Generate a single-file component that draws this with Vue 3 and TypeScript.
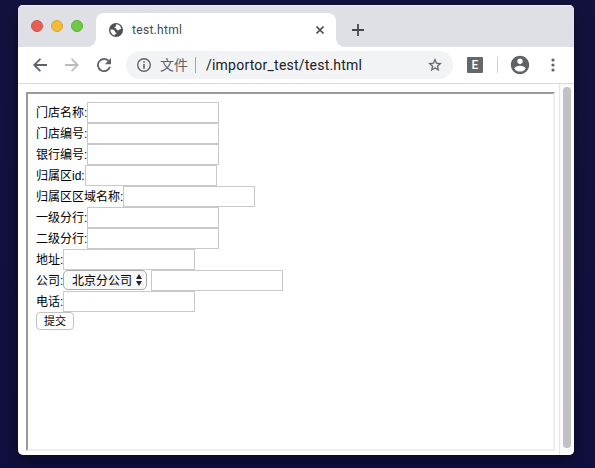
<script setup lang="ts">
interface Field {
  label: string
  width: number
  company?: boolean
}

const fields: Field[] = [
  { label: '门店名称:', width: 51 },
  { label: '门店编号:', width: 51 },
  { label: '银行编号:', width: 51 },
  { label: '归属区id:', width: 49 },
  { label: '归属区区域名称:', width: 87 },
  { label: '一级分行:', width: 51 },
  { label: '二级分行:', width: 51 },
  { label: '地址:', width: 27 },
  { label: '公司:', width: 27, company: true },
  { label: '电话:', width: 27 },
]
</script>

<template>
  <div class="desktop">
    <main class="window">
      <header class="tabs">
        <div class="lights"><i class="red" /><i class="yellow" /><i class="green" /></div>
        <div class="tab">
          <svg class="globe" width="14" height="14" viewBox="0 0 14 14">
            <circle cx="7" cy="7" r="7" fill="#4d5156" />
            <path d="M7.8 1.3c-1.3.5-1.1 1.3-.8 2.1-1.2.1-1.7.6-1.6 1.7.9-.1 1.7.1 2 .9.4 1 .8 1.4 1.9 1.2 1-.2 1.1-1.4 2.9-1.2C12 3.4 10.3 1.5 7.8 1.3zM1.4 6.5c-.1 3 1.4 5.2 4.3 6v-1.2c1.2-.1 1.8-.5 1.8-1.6-.9-.1-1.4-.4-1.6-1.3-.2-1.5-1.7-2-4.5-1.9z" fill="#fff" />
          </svg>
          <span class="title">test.html</span>
          <svg class="close" width="8" height="8" viewBox="0 0 8 8"><path d="M.5.5l7 7m0-7l-7 7" stroke="#4d5156" stroke-width="1.6" /></svg>
        </div>
        <svg class="plus" width="12" height="12" viewBox="0 0 12 12"><path d="M6 0v12M0 6h12" stroke="#45494d" stroke-width="1.8" /></svg>
      </header>
      <nav class="toolbar">
        <svg class="back" width="14" height="14" viewBox="0 0 14 14"><path d="M14 7H1.4M7.4.8L1.2 7l6.2 6.2" fill="none" stroke="#5f6368" stroke-width="1.8" /></svg>
        <svg class="forward" width="14" height="14" viewBox="0 0 14 14"><path d="M0 7h12.6M6.6.8L12.8 7l-6.2 6.2" fill="none" stroke="#babcbe" stroke-width="1.8" /></svg>
        <svg class="reload" width="14" height="14" viewBox="0 0 14 14"><path d="M12.9 8.8A6.1 6.1 0 1 1 11.5 2.9" fill="none" stroke="#5f6368" stroke-width="1.8" /><path d="M14 0v6.2H7.8z" fill="#5f6368" /></svg>
        <div class="address">
          <svg width="14" height="14" viewBox="0 0 14 14"><circle cx="7" cy="7" r="6.3" fill="none" stroke="#5f6368" stroke-width="1.4" /><path d="M7 3.2v1.5M7 6v4.8" stroke="#5f6368" stroke-width="1.6" /></svg>
          <span class="scheme">文件</span>
          <span class="divider" />
          <span class="url">/importor_test/test.html</span>
          <svg class="star" width="16" height="16" viewBox="0 0 24 24"><path d="M22 9.24l-7.19-.62L12 2 9.19 8.63 2 9.24l5.46 4.73L5.82 21 12 17.27 18.18 21l-1.63-7.03L22 9.24zM12 15.4l-3.76 2.27 1-4.28-3.32-2.88 4.38-.38L12 6.1l1.71 4.04 4.38.38-3.32 2.88 1 4.28L12 15.4z" fill="#5f6368" stroke="#5f6368" stroke-width=".3" /></svg>
        </div>
        <span class="extension">E</span>
        <span class="separator" />
        <svg class="avatar" width="22" height="22" viewBox="0 0 24 24"><path d="M12 2C6.48 2 2 6.48 2 12s4.48 10 10 10 10-4.48 10-10S17.52 2 12 2zm0 3c1.66 0 3 1.34 3 3s-1.34 3-3 3-3-1.34-3-3 1.34-3 3-3zm0 14.2c-2.5 0-4.71-1.28-6-3.22.03-1.99 4-3.08 6-3.08 1.99 0 5.97 1.09 6 3.08-1.29 1.94-3.5 3.22-6 3.22z" fill="#5f6368" /></svg>
        <svg class="more" width="4" height="14" viewBox="0 0 4 14"><g fill="#5f6368"><circle cx="2" cy="2" r="1.6" /><circle cx="2" cy="7" r="1.6" /><circle cx="2" cy="12" r="1.6" /></g></svg>
      </nav>
      <section class="viewport">
        <form class="frame" @submit.prevent>
          <div v-for="field in fields" :key="field.label" class="row">
            <label :style="{ width: field.width + 'px' }">{{ field.label }}</label>
            <div v-if="field.company" class="select">
              <span>北京分公司</span>
              <svg width="6" height="12" viewBox="0 0 6 12"><path d="M3 0l3 5H0zM3 12l3-5H0z" fill="#222" /></svg>
            </div>
            <input type="text" />
          </div>
          <button type="submit">提交</button>
        </form>
        <div class="scrollbar"><div class="thumb" /></div>
      </section>
    </main>
  </div>
</template>

<style>
body {
  margin: 0;
  overflow: hidden;
}
</style>

<style scoped>
* {
  box-sizing: border-box;
}
svg {
  display: block;
  flex: none;
}
.desktop {
  width: 595px;
  height: 468px;
  padding: 5px 21px 13px 18px;
  background: linear-gradient(#13123f, #101040);
  font-family: Roboto, "Noto Sans CJK SC", sans-serif;
}
.window {
  height: 450px;
  border-radius: 5px;
  overflow: hidden;
  background: #fff;
  box-shadow: 0 7px 18px rgba(0, 0, 0, 0.45);
}
.tabs {
  display: flex;
  height: 42px;
  background: #dfe0e5;
  box-shadow: inset 0 1px #efeff2;
}
.lights {
  display: flex;
  gap: 8px;
  padding: 15px 0 0 13px;
  width: 78px;
}
.lights i {
  width: 12px;
  height: 12px;
  border: 1px solid #d64f48;
  border-radius: 50%;
  background: #e35f57;
}
.lights .yellow {
  background: #efbb3a;
  border-color: #dda52d;
}
.lights .green {
  background: #70c844;
  border-color: #5cb233;
}
.tab {
  position: relative;
  display: flex;
  align-items: center;
  width: 240px;
  height: 34px;
  margin-top: 8px;
  padding: 0 12px 0 13px;
  border-radius: 8px 8px 0 0;
  background: #fff;
}
.tab::before,
.tab::after {
  content: "";
  position: absolute;
  bottom: 0;
  width: 8px;
  height: 8px;
}
.tab::before {
  right: 100%;
  background: radial-gradient(circle at 0 0, transparent 7.5px, #fff 8px);
}
.tab::after {
  left: 100%;
  background: radial-gradient(circle at 100% 0, transparent 7.5px, #fff 8px);
}
.title {
  margin-left: 9px;
  font-size: 12px;
  letter-spacing: 0.3px;
  color: #45494d;
}
.close {
  margin-left: auto;
}
.plus {
  margin: 19px 0 0 16px;
}
.toolbar {
  display: flex;
  align-items: center;
  height: 37px;
  padding-left: 15px;
  border-bottom: 1px solid #d8d9da;
}
.forward,
.reload {
  margin-left: 18px;
}
.address {
  display: flex;
  align-items: center;
  width: 327px;
  height: 28px;
  margin-left: 15px;
  padding: 0 10px 0 11px;
  border-radius: 14px;
  background: #f1f3f4;
  font-size: 14px;
  white-space: nowrap;
}
.scheme {
  width: 28px;
  margin-left: 9px;
  padding-bottom: 2px;
  color: #5f6368;
}
.divider {
  width: 1px;
  height: 16px;
  margin: 0 10px 0 7px;
  background: #a5a8ab;
}
.url {
  color: #202124;
  letter-spacing: 0.22px;
}
.star {
  margin-left: auto;
}
.extension {
  width: 16px;
  height: 16px;
  margin-left: 14px;
  border-radius: 1px;
  background: #666;
  color: #fff;
  font: 500 12px/16px Roboto, sans-serif;
  text-align: center;
}
.separator {
  width: 1px;
  height: 16px;
  margin: 0 11px 0 14px;
  background: #cfd1d3;
}
.avatar {
  flex: none;
}
.more {
  margin-left: 19.5px;
}
.viewport {
  display: flex;
  height: 371px;
}
.frame {
  width: 529px;
  height: 359px;
  margin: 8px 4px 0 8px;
  padding: 8px;
  border: 2px solid;
  border-color: #9a9a9a #eee #eee #9a9a9a;
  font: 12px/21px "Liberation Sans", "Noto Sans CJK SC", sans-serif;
  color: #000;
}
.row {
  display: flex;
  height: 21px;
}
.row label {
  flex: none;
  padding-top: 1px;
  white-space: nowrap;
}
.row input {
  width: 132px;
  height: 21px;
  padding: 2px;
  border: 1px solid #c9c9c9;
  border-radius: 0;
  outline: 0;
  background: #fff;
}
.select {
  display: flex;
  align-items: center;
  justify-content: space-between;
  width: 84px;
  height: 20px;
  margin-right: 4px;
  padding: 0 4px 0 8px;
  border: 1px solid #a9a9a9;
  border-radius: 5px;
  background: #f8f8f8;
}
.select span {
  padding-top: 2px;
}
button {
  display: block;
  width: 38px;
  height: 18px;
  padding: 0;
  border: 1px solid #c2c2c2;
  border-radius: 4px;
  background: #fff;
  color: #000;
  font: 11px/16px "Liberation Sans", "Noto Sans CJK SC", sans-serif;
}
.scrollbar {
  width: 15px;
  padding: 3px 3px 7px;
  border-left: 1px solid #e5e5e5;
  background: #fafafa;
}
.thumb {
  width: 8px;
  height: 361px;
  border-radius: 4px;
  background: #c1c1c1;
}
</style>
